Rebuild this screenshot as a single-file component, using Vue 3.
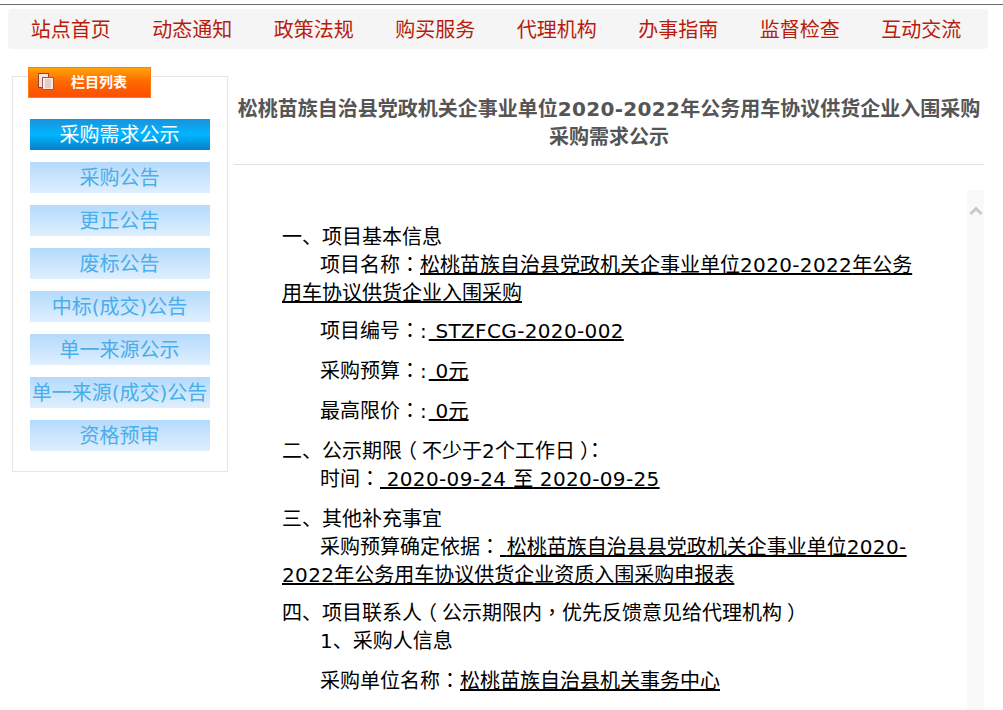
<script setup>
const navItems = ["站点首页", "动态通知", "政策法规", "购买服务", "代理机构", "办事指南", "监督检查", "互动交流"];
const menuItems = ["采购需求公示", "采购公告", "更正公告", "废标公告", "中标(成交)公告", "单一来源公示", "单一来源(成交)公告", "资格预审"];
</script>

<template>
    <div class="page">
        <nav class="nav">
            <a v-for="item in navItems" :key="item" class="nav-item">{{ item }}</a>
        </nav>
        <div class="main">
            <aside class="side">
                <div class="side-tab">
                    <svg class="tab-icon" width="16" height="17" viewBox="0 0 16 17">
                        <rect x="0.5" y="0.5" width="10" height="14" fill="#f6e6e2" stroke="#9c3f30" />
                        <rect x="4.5" y="4.5" width="11" height="12" fill="#f7e9e6" stroke="#a9564a" />
                        <rect x="7" y="6" width="6" height="9" fill="#e6cbc6" />
                    </svg>
                    <span class="tab-text">栏目列表</span>
                </div>
                <ul class="menu">
                    <li v-for="(item, index) in menuItems" :key="item" :class="['menu-item', { active: index === 0 }]">{{ item }}</li>
                </ul>
            </aside>
            <section class="article">
                <h1 class="title">松桃苗族自治县党政机关企事业单位<span class="bold-lat">2020-2022</span>年公务用车协议供货企业入围采购<br />采购需求公示</h1>
                <div class="scroll">
                    <div class="body">
                        <p>一、项目基本信息</p>
                        <p class="ind">项目名称<span class="tc">：</span><u>松桃苗族自治县党政机关企事业单位<span class="lat">2020-2022</span>年公务用车协议供货企业入围采购</u></p>
                        <p class="ind mt10">项目编号<span class="tc">：</span><span class="colon">:</span><u><span class="lat"> STZFCG-2020-002</span></u></p>
                        <p class="ind mt12">采购预算<span class="tc">：</span><span class="colon">:</span><u><span class="lat"> 0</span>元</u></p>
                        <p class="ind mt12">最高限价<span class="tc">：</span><span class="colon">:</span><u><span class="lat"> 0</span>元</u></p>
                        <p class="mt12">二、公示期限<span class="tc lp">（</span>不少于<span class="lat">2</span>个工作日<span class="tc rp">）</span><span class="tc">：</span></p>
                        <p class="ind">时间<span class="tc">：</span><u><span class="lat"> 2020-09-24 </span>至<span class="lat"> 2020-09-25</span></u></p>
                        <p class="mt12">三、其他补充事宜</p>
                        <p class="ind">采购预算确定依据<span class="tc">：</span><u><span class="lat">&nbsp;</span>松桃苗族自治县县党政机关企事业单位<span class="lat">2020-<wbr />2022</span>年公务用车协议供货企业资质入围采购申报表</u></p>
                        <p class="mt10">四、项目联系人<span class="tc lp">（</span>公示期限内<span class="tc">，</span>优先反馈意见给代理机构<span class="tc rp">）</span></p>
                        <p class="ind">1、采购人信息</p>
                        <p class="ind mt12">采购单位名称<span class="tc">：</span><u>松桃苗族自治县机关事务中心</u></p>
                    </div>
                    <div class="track">
                        <svg width="14" height="10" viewBox="0 0 14 10" class="arrow">
                            <path d="M1.5 8 L7 2.5 L12.5 8" fill="none" stroke="#c9c9c9" stroke-width="3" />
                        </svg>
                    </div>
                </div>
            </section>
        </div>
    </div>
</template>

<style>
html,
body {
    margin: 0;
    height: 100%;
    overflow: hidden;
    background: #fff;
}
</style>

<style scoped>
.page {
    height: 710px;
    overflow: hidden;
    font-family: "DejaVu Sans", "Noto Sans CJK SC", sans-serif;
    color: #000;
}

.page::before {
    content: "";
    display: block;
    height: 4px;
    border-bottom: 1px solid #6a6a6a;
}

.nav {
    display: flex;
    margin: 4px 15px 0 8px;
    padding: 0 6px 0 2px;
    height: 40px;
    background: #f5f5f5;
    border-radius: 4px;
}

.nav-item {
    flex: 1;
    text-align: center;
    font-size: 20px;
    line-height: 42px;
    color: #b81c0c;
}

.main {
    display: flex;
    margin: 27px 19px 0 12px;
}

.side {
    width: 214px;
    height: 394px;
    flex: none;
    border: 1px solid #e6e6e6;
}

.side-tab {
    display: flex;
    align-items: center;
    box-sizing: border-box;
    width: 123px;
    height: 31px;
    margin: -10px 0 0 15px;
    padding-left: 9px;
    border: 1px solid #ff7d12;
    background: linear-gradient(to bottom, #ffa40a 0%, #ff6a00 45%, #fb4f00 100%);
}

.tab-icon {
    flex: none;
    margin-top: -2px;
}

.tab-text {
    margin-left: 17px;
    margin-top: -1px;
    font-size: 14px;
    font-weight: 700;
    color: #fff;
    line-height: 1;
}

.menu {
    list-style: none;
    margin: 21px 0 0 17px;
    padding: 0;
    display: flex;
    flex-direction: column;
    gap: 12px;
}

.menu-item {
    box-sizing: border-box;
    width: 180px;
    height: 31px;
    padding-right: 1px;
    line-height: 32px;
    text-align: center;
    font-size: 20px;
    white-space: nowrap;
    color: #4aaeea;
    background: linear-gradient(to bottom, #b4dafc, #dfeffe);
}

.menu-item.active {
    color: #fff;
    background: linear-gradient(to bottom, #1b92dc 0%, #00b6ff 50%, #0a7ec8 100%);
}

.article {
    flex: 1;
    margin-left: 6px;
    min-width: 0;
}

.title {
    margin: 19px 0 0;
    padding-bottom: 13px;
    border-bottom: 1px solid #e0e0e0;
    text-align: center;
    font-size: 20px;
    line-height: 28px;
    font-weight: 700;
    color: #555;
    white-space: nowrap;
}

.bold-lat {
    letter-spacing: 0.3px;
}

.scroll {
    position: relative;
    margin-top: 25px;
    padding: 33px 0 0 48px;
}

.body {
    width: 632px;
    font-size: 20px;
    line-height: 28px;
}

.body p {
    margin: 0;
}

.lat {
    letter-spacing: 0.35px;
    white-space: pre-wrap;
}

.tc {
    font-family: "Noto Sans CJK TC", sans-serif;
    line-height: 0;
}

.colon {
    letter-spacing: 2px;
}

.lp {
    margin-left: -5px;
    margin-right: 5px;
}

.rp {
    margin-left: 5px;
    margin-right: -5px;
}

.ind {
    text-indent: 38px;
}

.mt10 {
    margin-top: 10px !important;
}

.mt12 {
    margin-top: 12px !important;
}

.track {
    position: absolute;
    top: 0;
    right: 0;
    width: 17px;
    height: 600px;
    background: #f9f9f9;
}

.arrow {
    display: block;
    margin: 16px 0 0 2px;
}
</style>
